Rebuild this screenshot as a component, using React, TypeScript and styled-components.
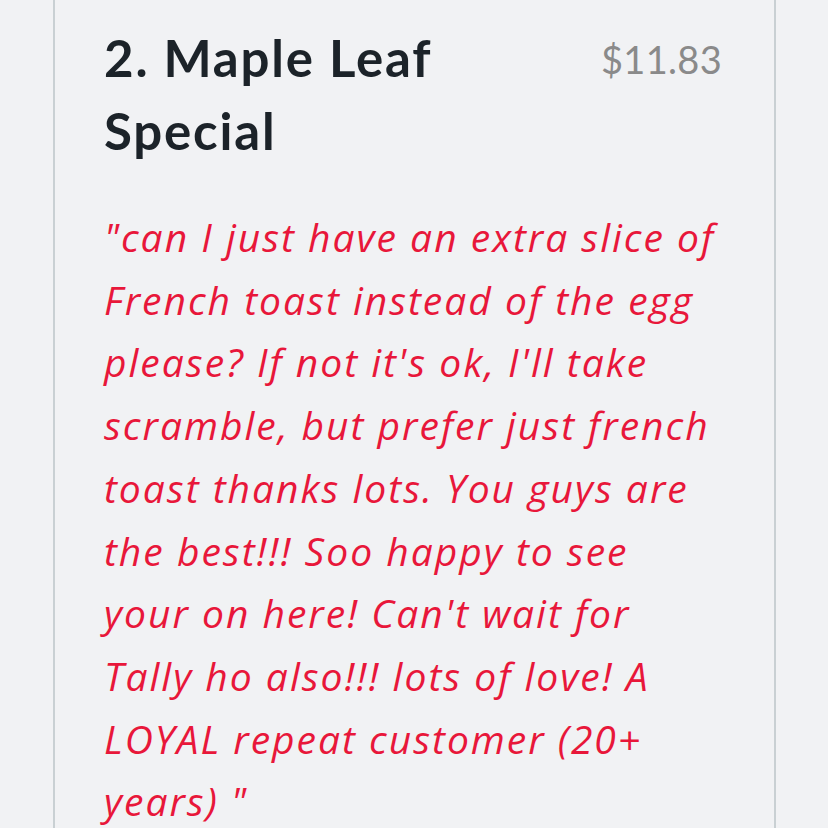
import React from "react";
import styled, { createGlobalStyle } from "styled-components";

const Global = createGlobalStyle`
  html, body { margin: 0; padding: 0; background: #f1f2f4; }
  body { font-family: "Open Sans", "Noto Sans", sans-serif; }
`;

const Page = styled.div`
  height: 828px;
  overflow: hidden;
  padding-left: 53px;
`;

const Card = styled.div`
  width: 723px;
  min-height: 828px;
  box-sizing: border-box;
  border-left: 2px solid #c9d0d3;
  border-right: 2px solid #c9d0d3;
  padding: 21px 52px 0 49px;
`;

const Header = styled.div`
  display: flex;
  justify-content: space-between;
  align-items: flex-start;
  gap: 24px;
`;

const Title = styled.h2`
  margin: 0;
  font-family: Lato, "Open Sans", sans-serif;
  font-size: 51px;
  line-height: 73px;
  font-weight: 700;
  letter-spacing: 1.8px;
  color: #1c2329;
  max-width: 440px;
`;

const Price = styled.div`
  font-family: Lato, "Open Sans", sans-serif;
  font-size: 38px;
  line-height: 73px;
  letter-spacing: 0.3px;
  color: #8a8a8a;
  padding-top: 2px;
`;

const Note = styled.p`
  margin: 39px 0 0;
  font-size: 39px;
  line-height: 62.7px;
  font-style: italic;
  letter-spacing: 2px;
  color: #e8173a;
`;

export default function App() {
  return (
    <>
      <Global />
      <Page>
        <Card>
          <Header>
            <Title>2. Maple Leaf Special</Title>
            <Price>$11.83</Price>
          </Header>
          <Note>
            "can I just have an extra slice of French toast instead of the egg please? If not it's ok, I'll take scramble, but prefer just french toast thanks lots. You guys are the best!!! Soo happy to see your on here! Can't wait for Tally ho also!!! lots of love! A LOYAL repeat customer (20+ years) "
          </Note>
        </Card>
      </Page>
    </>
  );
}
